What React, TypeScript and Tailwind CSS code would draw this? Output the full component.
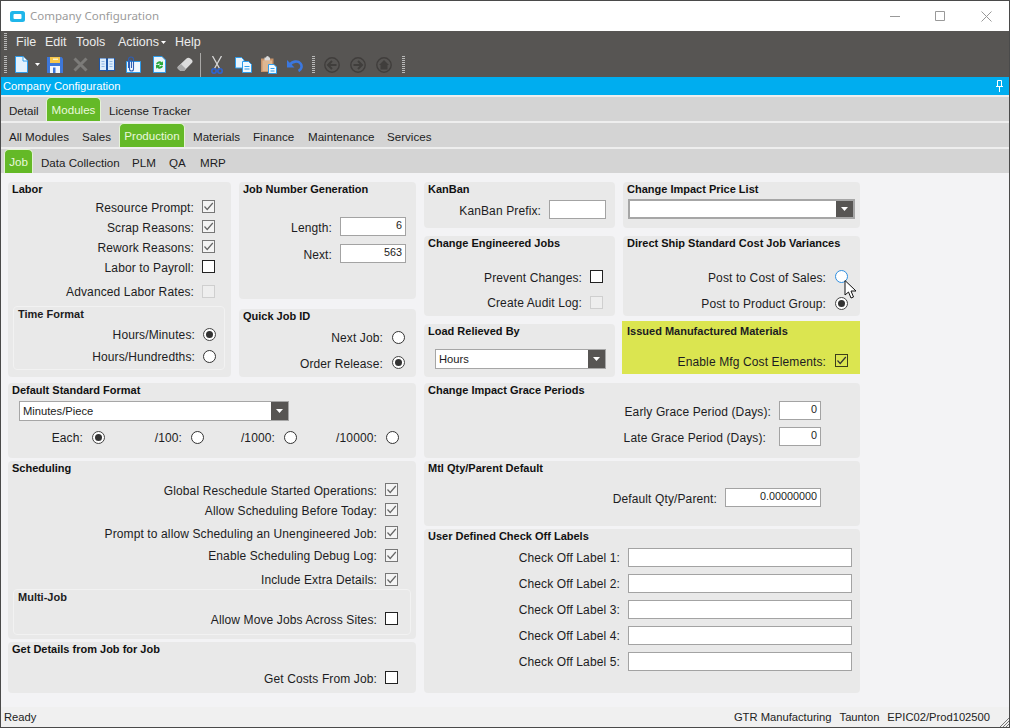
import type { ReactNode } from "react";
import clsx from "clsx";

const GRIP =
  "h-[18px] w-[3px] bg-[repeating-linear-gradient(to_bottom,#b9b9b9_0,#b9b9b9_1px,transparent_1px,transparent_2px)]";

function Tab({ label, active, className }: { label: string; active?: boolean; className?: string }) {
  if (active) {
    return (
      <div
        className={clsx(
          "flex h-full items-center justify-center rounded-t-[5px] border-x border-t border-[#e4f3d6] bg-[#64b927] text-[#e9f8dc]",
          className,
        )}
      >
        {label}
      </div>
    );
  }
  return <div className={clsx("whitespace-nowrap pt-[4px]", className)}>{label}</div>;
}

function TabBar({ children, className }: { children: ReactNode; className?: string }) {
  return <div className={clsx("flex h-[24px] items-center bg-[#d4d4d4] text-[11.6px]", className)}>{children}</div>;
}

function Panel({ title, className, children }: { title: string; className?: string; children?: ReactNode }) {
  return (
    <div className={clsx("rounded-[4px] bg-[#e9e9e9]", className)}>
      <div className="h-[14px] whitespace-nowrap pl-[4px] text-[11px] font-bold leading-[14px] text-[#111]">{title}</div>
      {children}
    </div>
  );
}

function Row({ label, children, className }: { label: string; children: ReactNode; className?: string }) {
  return (
    <div className={clsx("flex h-5 items-center justify-end gap-2", className)}>
      <span className="whitespace-nowrap pt-[2px] tracking-[0.12px]">{label}</span>
      {children}
    </div>
  );
}

// most check boxes sit a pixel above their label, "flat" ones don't
function Check({ checked, disabled, flat, tone }: { checked?: boolean; disabled?: boolean; flat?: boolean; tone?: "yellow" }) {
  return (
    <span
      className={clsx(
        "flex h-[13px] w-[13px] shrink-0 items-center justify-center border",
        !flat && "mb-[2px]",
        tone === "yellow"
          ? "border-[#3d3d1a] bg-transparent"
          : disabled
            ? "border-[#cfcfcf] bg-[#eeeeee]"
            : checked
              ? "border-[#777] bg-[#f4f4f4]"
              : "border-[#222] bg-white",
      )}
    >
      {checked && (
        <svg width="11" height="11" viewBox="0 0 11 11" fill="none">
          <path d="M1.5 5.5 4.2 8.5 9.8 2" stroke={tone === "yellow" ? "#333" : "#666"} strokeWidth="1.2" />
        </svg>
      )}
    </span>
  );
}

function Radio({ selected, focused, up }: { selected?: boolean; focused?: boolean; up?: boolean }) {
  return (
    <span
      className={clsx(
        "flex h-[13px] w-[13px] shrink-0 items-center justify-center rounded-full border bg-white",
        up && "mb-[2px]",
        focused ? "border-[#2f8fe0]" : selected ? "border-[#444]" : "border-[#333]",
      )}
    >
      {selected && <span className="h-[7px] w-[7px] rounded-full bg-[#333]" />}
    </span>
  );
}

function Input({ value, className }: { value?: string; className?: string }) {
  return (
    <div
      className={clsx(
        "flex h-[19px] shrink-0 items-center justify-end border border-[#a3a3a3] bg-white pb-[2px] pr-[3px] text-[10.8px]",
        className,
      )}
    >
      {value}
    </div>
  );
}

function Select({ value, className }: { value?: string; className?: string }) {
  return (
    <div className={clsx("flex h-5 items-stretch border-[#a6a6a6] bg-white", className)}>
      <span className="flex-1 pl-[3px] text-[11.2px] leading-[18px]">{value}</span>
      <span className="flex w-[17px] items-center justify-center bg-[#575553]">
        <svg width="7" height="4" viewBox="0 0 7 4">
          <path d="M0 0h7L3.5 4z" fill="#fff" />
        </svg>
      </span>
    </div>
  );
}

function ToolbarIcons() {
  return (
    <div className="flex h-[25px] items-center pl-[3px]">
      <div className={GRIP} />
      <svg className="ml-[8px]" width="13" height="17" viewBox="0 0 13 17">
        <path d="M.5.5h7.500l4.500 4.500v11.500h-12z" fill="#e2f1fd" stroke="#2d9cec" />
        <path d="M8 .5v4.500h4.500" fill="#fff" stroke="#2d9cec" />
      </svg>
      <svg className="ml-[7px]" width="5" height="3" viewBox="0 0 5 3">
        <path d="M0 0h5L2.500 3z" fill="#fff" />
      </svg>
      <svg className="ml-[7px]" width="16" height="16" viewBox="0 0 16 16">
        <path d="M0 0h14.500L16 1.500V16H0z" fill="#3d77d9" />
        <path d="M3 0h10v6H3z" fill="#f6c64a" />
        <path d="M6 1.500h5v1.500H6z" fill="#fff3c0" />
        <path d="M3 9h10v7H3z" fill="#f2f6fc" />
        <path d="M6 10.500h2.500v5.500H6z" fill="#3d77d9" />
      </svg>
      <svg className="ml-[10px]" width="15" height="15" viewBox="0 0 15 15">
        <path d="M1.500 1.500l12 12M13.500 1.500l-12 12" stroke="#7c7b79" strokeWidth="3" />
      </svg>
      <svg className="ml-[11px]" width="16" height="15" viewBox="0 0 16 15">
        <path d="M0 1h7l1 1 1-1h7v13H9l-1 1-1-1H0z" fill="#1d56a8" />
        <path d="M1 1.500h6v11.500H1zM9 1.500h6v11.500H9z" fill="#dcecfb" />
        <path d="M2.500 4.500h3M2.500 7h3M2.500 9.500h3M10.500 4.500h3M10.500 7h3M10.500 9.500h3" stroke="#8fb6e4" />
      </svg>
      <svg className="ml-[11px]" width="15" height="17" viewBox="0 0 15 17" fill="none">
        <path d="M.5 5.500h14v11H.5z" fill="#f0f7fe" stroke="#2d9cec" />
        <path d="M2.500 12V3.500a2.500 2.500 0 0 1 5 0V13a2 2 0 0 1-4 0V5a1 1 0 0 1 2 0v7" stroke="#2f5fb3" strokeWidth="1.100" />
      </svg>
      <svg className="ml-[12px]" width="13" height="17" viewBox="0 0 13 17">
        <path d="M.5.5h8.500l3.500 3.500v12.500H.5z" fill="#eaf5fd" stroke="#2d9cec" />
        <path d="M3 8a3.500 3.500 0 0 1 6-1.500L10 5v4H6l1.200-1.200A2 2 0 0 0 4.500 8.500z" fill="#27a83a" />
        <path d="M10 10a3.500 3.500 0 0 1-6 1.500L3 13V9h4l-1.200 1.200a2 2 0 0 0 2.700-.7z" fill="#27a83a" />
      </svg>
      <svg className="ml-[11px]" width="16" height="15" viewBox="0 0 16 15">
        <path d="M1 9.500 9.500 1.500c1-1 2.500-1 3.500-.2l1.800 1.500c1 1 1 2.300 0 3.300L7 14H3.500L1.200 12c-.8-.7-.8-1.800-.2-2.500z" fill="#dcdcdc" />
        <path d="M1 9.500 4 7l5 5-2 2H3.500L1.200 12c-.8-.7-.8-1.800-.2-2.500z" fill="#a9a9a9" />
      </svg>
      <div className="ml-[7px] h-[24px] w-px bg-[#a9a8a6]" />
      <svg className="ml-[10px]" width="12" height="18" viewBox="0 0 12 18" fill="none">
        <path d="M1.500 0 8.500 12.500M10.500 0 3.500 12.500" stroke="#d8d8d8" strokeWidth="1.300" />
        <circle cx="3" cy="15" r="2.200" stroke="#2e63d0" strokeWidth="1.600" />
        <circle cx="9" cy="15" r="2.200" stroke="#2e63d0" strokeWidth="1.600" />
      </svg>
      <svg className="ml-[12px]" width="17" height="16" viewBox="0 0 17 16">
        <path d="M.5.500h6l2.500 2.500v8H.5z" fill="#e8f4fd" stroke="#2d9cec" />
        <path d="M7.500 4.500h6l3 3v8h-9z" fill="#f2f9fe" stroke="#2d9cec" />
        <path d="M9.500 9.500h5M9.500 12h5" stroke="#2d9cec" />
      </svg>
      <svg className="ml-[9px]" width="16" height="18" viewBox="0 0 16 18">
        <path d="M0 2.500h12.500V16H0z" fill="#c9946a" />
        <path d="M1.500 4.500h9.500V15H1.500z" fill="#deb792" />
        <path d="M3.500 1.500h1.500a1.500 1.500 0 0 1 3 0H9v3H3.500z" fill="#dcdcdc" />
        <path d="M7.500 8.500h5.500l2.500 2.500v6.500h-8z" fill="#f2f9fe" stroke="#2d9cec" />
        <path d="M9.500 12.500h4M9.500 15h4" stroke="#2d9cec" />
      </svg>
      <svg className="ml-[10px]" width="16" height="14" viewBox="0 0 16 14" fill="none">
        <path d="M0 2v7.500h7.500z" fill="#3b78e0" />
        <path d="M3 7C5 3 11 2.500 13.500 5.500c2 2.500 1 6-2 7.500" stroke="#3b78e0" strokeWidth="2.600" />
      </svg>
      <div className={clsx(GRIP, "ml-[9px]")} />
      <svg className="ml-[9px]" width="16" height="16" viewBox="0 0 16 16" fill="none">
        <circle cx="8" cy="8" r="7.200" stroke="#403e3c" strokeWidth="1.400" />
        <path d="M12.500 8H4.500M8 4 4 8l4 4" stroke="#403e3c" strokeWidth="2" />
      </svg>
      <svg className="ml-[10px]" width="16" height="16" viewBox="0 0 16 16" fill="none">
        <circle cx="8" cy="8" r="7.200" stroke="#403e3c" strokeWidth="1.400" />
        <path d="M3.500 8h8M8 4l4 4-4 4" stroke="#403e3c" strokeWidth="2" />
      </svg>
      <svg className="ml-[10px]" width="16" height="16" viewBox="0 0 16 16" fill="none">
        <circle cx="8" cy="8" r="7.200" stroke="#403e3c" strokeWidth="1.400" />
        <path d="M8 3 13 8H11.500v4.500h-7V8H3z" fill="#403e3c" />
      </svg>
      <div className={clsx(GRIP, "ml-[10px]")} />
    </div>
  );
}

export default function App() {
  return (
    <div className="relative flex h-[728px] w-[1010px] flex-col overflow-hidden border border-[#4a4a4a] bg-[#f3f3f5] font-['Liberation_Sans',Arial,sans-serif] text-[12px] text-[#1c1c22]">
      {/* window title bar */}
      <div className="flex h-[30px] items-center bg-white pl-[9px]">
        <svg width="15" height="11" viewBox="0 0 15 11">
          <rect width="15" height="11" rx="2.500" fill="#1fb6ea" />
          <rect x="3.500" y="3" width="8" height="5" rx="1" fill="#fff" />
        </svg>
        <span className="ml-[5px] font-['Noto_Sans',sans-serif] text-[11.5px] text-[#9b9b9b]">Company Configuration</span>
        <svg className="ml-auto" width="10" height="10" viewBox="0 0 10 10">
          <path d="M0 5.500h10" stroke="#999" />
        </svg>
        <svg className="ml-[35px]" width="10" height="10" viewBox="0 0 10 10" fill="none">
          <path d="M.5.500h9v9h-9z" stroke="#999" />
        </svg>
        <svg className="ml-[36px] mr-[17px]" width="11" height="11" viewBox="0 0 11 11">
          <path d="M.5.500l10 10M10.500.500l-10 10" stroke="#999" />
        </svg>
      </div>

      {/* menu + toolbar */}
      <div className="h-[46px] bg-[#575553] text-[#ececec]">
        <div className="flex h-[21px] items-center pl-[3px] pt-[1px] text-[12.5px]">
          <div className={clsx(GRIP, "h-[11px]")} />
          <span className="ml-[9px] w-[29px]">File</span>
          <span className="w-[31px]">Edit</span>
          <span className="w-[42px]">Tools</span>
          <span className="flex w-[57px] items-center">
            Actions
            <svg className="ml-[2px]" width="5" height="3" viewBox="0 0 5 3">
              <path d="M0 0h5L2.500 3z" fill="#fff" />
            </svg>
          </span>
          <span>Help</span>
        </div>
        <ToolbarIcons />
      </div>

      <div className="flex h-[18px] items-center justify-between bg-[#00adef] pl-[2px] pr-[6px] text-[11.2px] text-white">
        <span>Company Configuration</span>
        <svg width="7" height="12" viewBox="0 0 7 12" fill="none">
          <path d="M1.500.500h4v6h-4zM0 6.500h7M3.500 7v5" stroke="#fff" />
        </svg>
      </div>

      <div className="flex flex-col gap-[2px] bg-[#eeeeee] pt-[2px]">
        <TabBar className="pl-[8px]">
          <Tab label="Detail" className="w-[37px]" />
          <Tab label="Modules" active className="w-[55px]" />
          <Tab label="License Tracker" className="ml-[8px]" />
        </TabBar>
        <TabBar className="pl-[8px]">
          <Tab label="All Modules" className="w-[73px]" />
          <Tab label="Sales" className="w-[37px]" />
          <Tab label="Production" active className="w-[66px]" />
          <Tab label="Materials" className="ml-[8px] w-[60px]" />
          <Tab label="Finance" className="w-[55px]" />
          <Tab label="Maintenance" className="w-[79px]" />
          <Tab label="Services" />
        </TabBar>
        <TabBar className="pl-[3px]">
          <Tab label="Job" active className="w-[29px]" />
          <Tab label="Data Collection" className="ml-[8px] w-[91px]" />
          <Tab label="PLM" className="w-[37px]" />
          <Tab label="QA" className="w-[31px]" />
          <Tab label="MRP" />
        </TabBar>
      </div>

      {/* form */}
      <div className="flex flex-1 gap-2 pl-[7px] pt-[9px]">
        <div className="flex w-[408px] flex-col">
          <div className="flex h-[195px] gap-2">
            <Panel title="Labor" className="w-[223px]">
              <div className="mt-px pr-[16px]">
                <Row label="Resource Prompt:"><Check checked /></Row>
                <Row label="Scrap Reasons:"><Check checked /></Row>
                <Row label="Rework Reasons:"><Check checked /></Row>
                <Row label="Labor to Payroll:"><Check /></Row>
                <Row label="Advanced Labor Rates:" className="mt-1"><Check disabled flat /></Row>
              </div>
              <div className="ml-[5px] mt-[5px] h-[64px] w-[212px] rounded-[4px] border border-[#f2f2f2]">
                <div className="h-[14px] pl-[4px] text-[11px] font-bold leading-[14px]">Time Format</div>
                <div className="mt-[3px] pr-[8px]">
                  <Row label="Hours/Minutes:"><Radio selected /></Row>
                  <Row label="Hours/Hundredths:" className="mt-[2px]"><Radio /></Row>
                </div>
              </div>
            </Panel>
            <div className="w-[177px]">
              <Panel title="Job Number Generation" className="h-[117px]">
                <div className="mt-[21px] pr-[10px]">
                  <Row label="Length:" className="h-[19px]"><Input value="6" className="w-[66px]" /></Row>
                  <Row label="Next:" className="mt-2 h-[19px]"><Input value="563" className="w-[66px]" /></Row>
                </div>
              </Panel>
              <Panel title="Quick Job ID" className="mt-[10px] h-[68px]">
                <div className="mt-1 pr-[11px]">
                  <Row label="Next Job:" className="gap-[9px]"><Radio /></Row>
                  <Row label="Order Release:" className="mt-[6px] gap-[9px]"><Radio selected up /></Row>
                </div>
              </Panel>
            </div>
          </div>

          <Panel title="Default Standard Format" className="mt-[6px] h-[75px]">
            <Select value="Minutes/Piece" className="ml-[11px] mt-1 w-[270px] border" />
            <div className="mt-[6px] flex">
              <Row label="Each:" className="w-[97px] gap-[9px]"><Radio selected /></Row>
              <Row label="/100:" className="w-[99px] gap-[9px]"><Radio /></Row>
              <Row label="/1000:" className="w-[93px] gap-[9px]"><Radio /></Row>
              <Row label="/10000:" className="w-[102px] gap-[9px]"><Radio /></Row>
            </div>
          </Panel>

          <Panel title="Scheduling" className="mt-[3px] h-[178px]">
            <div className="mt-[5px] pr-[18px]">
              <Row label="Global Reschedule Started Operations:"><Check checked /></Row>
              <Row label="Allow Scheduling Before Today:"><Check checked /></Row>
              <Row label="Prompt to allow Scheduling an Unengineered Job:" className="mt-[3px]"><Check checked /></Row>
              <Row label="Enable Scheduling Debug Log:" className="mt-[2px]"><Check checked flat /></Row>
              <Row label="Include Extra Details:" className="mt-1"><Check checked flat /></Row>
            </div>
            <div className="ml-[5px] h-[46px] w-[398px] rounded-[4px] border border-[#f2f2f2]">
              <div className="h-[14px] pl-[4px] text-[11px] font-bold leading-[14px]">Multi-Job</div>
              <Row label="Allow Move Jobs Across Sites:" className="mt-[5px] pr-[12px]"><Check /></Row>
            </div>
          </Panel>

          <Panel title="Get Details from Job for Job" className="mt-[3px] h-[51px]">
            <Row label="Get Costs From Job:" className="mt-3 pr-[18px]"><Check /></Row>
          </Panel>
        </div>

        <div className="flex w-[436px] flex-col">
          <div className="flex h-[195px] gap-2">
            <div className="w-[191px]">
              <Panel title="KanBan" className="h-[46px]">
                <Row label="KanBan Prefix:" className="mt-1 h-[19px] pr-[9px]"><Input className="w-[57px]" /></Row>
              </Panel>
              <Panel title="Change Engineered Jobs" className="mt-2 h-[80px]">
                <div className="mt-[17px] pr-[12px]">
                  <Row label="Prevent Changes:"><Check /></Row>
                  <Row label="Create Audit Log:" className="mt-[5px]"><Check disabled flat /></Row>
                </div>
              </Panel>
              <Panel title="Load Relieved By" className="mt-2 h-[53px]">
                <Select value="Hours" className="ml-[11px] mt-[11px] w-[171px] border" />
              </Panel>
            </div>
            <div className="w-[237px]">
              <Panel title="Change Impact Price List" className="h-[46px]">
                <Select className="ml-[5px] mt-[3px] w-[227px] border-2" />
              </Panel>
              <Panel title="Direct Ship Standard Cost Job Variances" className="mt-2 h-[80px]">
                <div className="mt-[17px] pr-[12px]">
                  <Row label="Post to Cost of Sales:" className="gap-[9px]"><Radio focused up /></Row>
                  <Row label="Post to Product Group:" className="mt-[6px] gap-[9px]"><Radio selected /></Row>
                </div>
              </Panel>
              <div className="-ml-px mt-[5px] h-[53px] w-[238px] bg-[#dbe550] pt-[3px]">
                <div className="h-[14px] pl-[5px] text-[11px] font-bold leading-[14px]">Issued Manufactured Materials</div>
                <Row label="Enable Mfg Cost Elements:" className="mt-[13px] gap-[9px] pr-[12px]"><Check checked tone="yellow" /></Row>
              </div>
            </div>
          </div>

          <Panel title="Change Impact Grace Periods" className="mt-[6px] h-[75px]">
            <div className="mt-1 pr-[39px]">
              <Row label="Early Grace Period (Days):" className="h-[19px]"><Input value="0" className="w-[42px]" /></Row>
              <Row label="Late Grace Period (Days):" className="mt-[7px] h-[19px] gap-[13px]"><Input value="0" className="w-[42px]" /></Row>
            </div>
          </Panel>

          <Panel title="Mtl Qty/Parent Default" className="mt-[3px] h-[65px]">
            <Row label="Default Qty/Parent:" className="mt-[13px] h-[19px] pr-[39px]"><Input value="0.00000000" className="w-[96px]" /></Row>
          </Panel>

          <Panel title="User Defined Check Off Labels" className="mt-[3px] h-[164px]">
            <div className="mt-1 flex flex-col gap-[6px] pr-[8px]">
              {[1, 2, 3, 4, 5].map((n) => (
                <Row key={n} label={`Check Off Label ${n}:`}>
                  <Input className="h-5 w-[224px]" />
                </Row>
              ))}
            </div>
          </Panel>
        </div>
      </div>

      <div className="flex h-5 items-center bg-[#f0f0f0] pl-[3px] text-[11.2px] text-[#222]">
        <span>Ready</span>
        <span className="ml-auto">GTR Manufacturing</span>
        <span className="ml-[8px]">Taunton</span>
        <span className="ml-[8px]">EPIC02/Prod102500</span>
        <svg className="ml-[10px] self-end" width="9" height="9" viewBox="0 0 9 9" fill="none">
          <path d="M9 0 0 9M9 3 3 9M9 6 6 9" stroke="#777" />
        </svg>
      </div>

      {/* mouse pointer */}
      <svg className="absolute left-[843px] top-[279px]" width="14" height="20" viewBox="0 0 14 20">
        <path d="M1 .500V15l3.500-3 2.500 6 2.500-1-2.500-6h5z" fill="#fff" stroke="#111" />
      </svg>
    </div>
  );
}
